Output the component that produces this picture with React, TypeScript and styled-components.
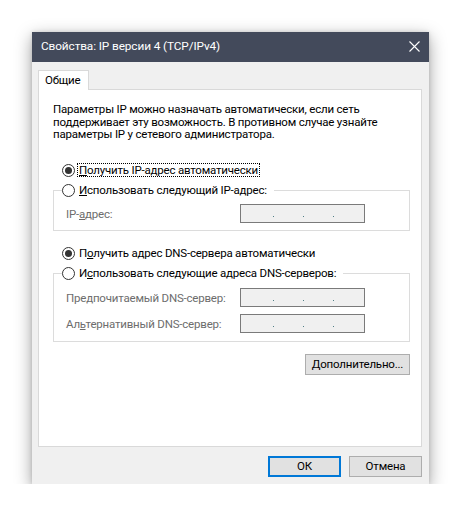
import React from "react";
import styled, { createGlobalStyle } from "styled-components";

const GlobalStyle = createGlobalStyle`
  html, body { margin: 0; padding: 0; background: #ffffff; }
  body {
    font-family: Roboto, "Noto Sans", "Liberation Sans", sans-serif;
    font-size: 11.5px;
    letter-spacing: -0.2px;
    color: #000;
  }
  * { box-sizing: border-box; }
`;

const Window = styled.div`
  margin: 32px 0 0 32px;
  width: 397px;
  height: 452px;
  background: #f0f0f0;
  display: flex;
  flex-direction: column;
  box-shadow: 0 5px 16px rgba(0, 0, 0, 0.38), 0 0 4px rgba(0, 0, 0, 0.12);
`;

const TitleBar = styled.div`
  height: 30px;
  flex: none;
  background: #434a5b;
  color: #ffffff;
  display: flex;
  align-items: center;
  justify-content: space-between;
  padding: 0 9px 2px 9px;
  font-size: 11.8px;
  letter-spacing: -0.1px;
`;

const CloseIcon = styled.svg`
  width: 11px;
  height: 11px;
  display: block;
`;

const Body = styled.div`
  flex: 1;
  display: flex;
  flex-direction: column;
  padding: 8px 7px 7px 6px;
`;

const TabStrip = styled.div`
  height: 19px;
  display: flex;
  align-items: flex-start;
`;

const Tab = styled.div`
  position: relative;
  z-index: 1;
  height: 20px;
  width: 51px;
  background: #ffffff;
  border: 1px solid #d9d9d9;
  border-bottom: none;
  padding-left: 6px;
  line-height: 18px;
`;

const Panel = styled.div`
  flex: 1;
  background: #ffffff;
  border: 1px solid #d9d9d9;
  padding: 13px 11px 0 14px;
  display: flex;
  flex-direction: column;
`;

const Intro = styled.p`
  margin: 0;
  line-height: 12.7px;
  white-space: nowrap;
`;

const RadioRow = styled.label<{ $gap?: number }>`
  display: flex;
  align-items: center;
  height: 20px;
  margin-top: ${(p) => p.$gap ?? 0}px;
  padding-left: ${(p) => (p.$gap !== undefined ? 9 : 0)}px;
  white-space: nowrap;
`;

const RadioCircle = styled.span<{ $checked?: boolean }>`
  width: 13px;
  height: 13px;
  border-radius: 50%;
  border: 1px solid #333333;
  background: #ffffff;
  display: flex;
  align-items: center;
  justify-content: center;
  flex: none;
  margin-right: 3px;
  &::after {
    content: "";
    width: 7px;
    height: 7px;
    border-radius: 50%;
    background: ${(p) => (p.$checked ? "#333333" : "transparent")};
  }
`;

const RadioText = styled.span<{ $focused?: boolean }>`
  line-height: 12px;
  padding: 0 1px;
  margin-left: -1px;
  border: 1px dotted ${(p) => (p.$focused ? "#000000" : "transparent")};
`;

const Accel = styled.span`
  text-decoration: underline;
  text-underline-offset: 1px;
`;

const Group = styled.fieldset<{ $pb: number }>`
  margin: 0;
  min-inline-size: 0;
  border: 1px solid #dcdcdc;
  padding: 0 0 ${(p) => p.$pb}px 0;
  display: flex;
  flex-direction: column;
`;

const Legend = styled.legend`
  margin-left: 8px;
  padding: 0 5px 0 0;
`;

const FieldRow = styled.div<{ $mt: number }>`
  display: grid;
  grid-template-columns: 174px 125px;
  align-items: center;
  padding-left: 12px;
  margin-top: ${(p) => p.$mt}px;
  color: #6d6d6d;
  white-space: nowrap;
`;

const IpBox = styled.div`
  height: 19px;
  border: 1px solid #7a7a7a;
  background: #f0f0f0;
  display: flex;
  align-items: flex-end;
  padding: 0 0 5px 32px;
  gap: 29px;
`;

const Dot = styled.span`
  width: 1px;
  height: 1px;
  background: #4f7f86;
`;

const ButtonBar = styled.div<{ $mt: number }>`
  display: flex;
  justify-content: flex-end;
  gap: 8px;
  margin-top: ${(p) => p.$mt}px;
`;

const Button = styled.button<{ $w: number; $default?: boolean }>`
  width: ${(p) => p.$w}px;
  height: 21px;
  padding: 0;
  font-family: inherit;
  font-size: 11.5px;
  letter-spacing: -0.2px;
  color: #000;
  background: #e1e1e1;
  border: ${(p) => (p.$default ? "2px solid #0078d7" : "1px solid #adadad")};
  border-radius: 0;
  line-height: 17px;
`;

const IpInput = () => (
  <IpBox>
    <Dot />
    <Dot />
    <Dot />
  </IpBox>
);

export default function App() {
  return (
    <>
      <GlobalStyle />
      <Window>
        <TitleBar>
          <span>Свойства: IP версии 4 (TCP/IPv4)</span>
          <CloseIcon viewBox="0 0 11 11">
            <path d="M0.5 0.5 L10.5 10.5 M10.5 0.5 L0.5 10.5" stroke="#ffffff" strokeWidth="1.1" fill="none" />
          </CloseIcon>
        </TitleBar>
        <Body>
          <TabStrip>
            <Tab>Общие</Tab>
          </TabStrip>
          <Panel>
            <Intro>
              Параметры IP можно назначать автоматически, если сеть
              <br />
              поддерживает эту возможность. В противном случае узнайте
              <br />
              параметры IP у сетевого администратора.
            </Intro>

            <RadioRow $gap={19}>
              <RadioCircle $checked />
              <RadioText $focused>
                <Accel>П</Accel>олучить IP-адрес автоматически
              </RadioText>
            </RadioRow>
            <Group $pb={7}>
              <Legend>
                <RadioRow>
                  <RadioCircle />
                  <RadioText>
                    <Accel>И</Accel>спользовать следующий IP-адрес:
                  </RadioText>
                </RadioRow>
              </Legend>
              <FieldRow $mt={4}>
                <span>
                  IP-<Accel>а</Accel>дрес:
                </span>
                <IpInput />
              </FieldRow>
            </Group>

            <RadioRow $gap={12}>
              <RadioCircle $checked />
              <RadioText>
                П<Accel>о</Accel>лучить адрес DNS-сервера автоматически
              </RadioText>
            </RadioRow>
            <Group $pb={8}>
              <Legend>
                <RadioRow>
                  <RadioCircle />
                  <RadioText>
                    И<Accel>с</Accel>пользовать следующие адреса DNS-серверов:
                  </RadioText>
                </RadioRow>
              </Legend>
              <FieldRow $mt={5}>
                <span>
                  Пре<Accel>д</Accel>почитаемый DNS-сервер:
                </span>
                <IpInput />
              </FieldRow>
              <FieldRow $mt={7}>
                <span>
                  Ал<Accel>ь</Accel>тернативный DNS-сервер:
                </span>
                <IpInput />
              </FieldRow>
            </Group>

            <ButtonBar $mt={12}>
              <Button $w={105}>
                <Accel>Д</Accel>ополнительно...
              </Button>
            </ButtonBar>
          </Panel>
          <ButtonBar $mt={9}>
            <Button $w={73} $default>
              ОК
            </Button>
            <Button $w={73}>Отмена</Button>
          </ButtonBar>
        </Body>
      </Window>
    </>
  );
}
